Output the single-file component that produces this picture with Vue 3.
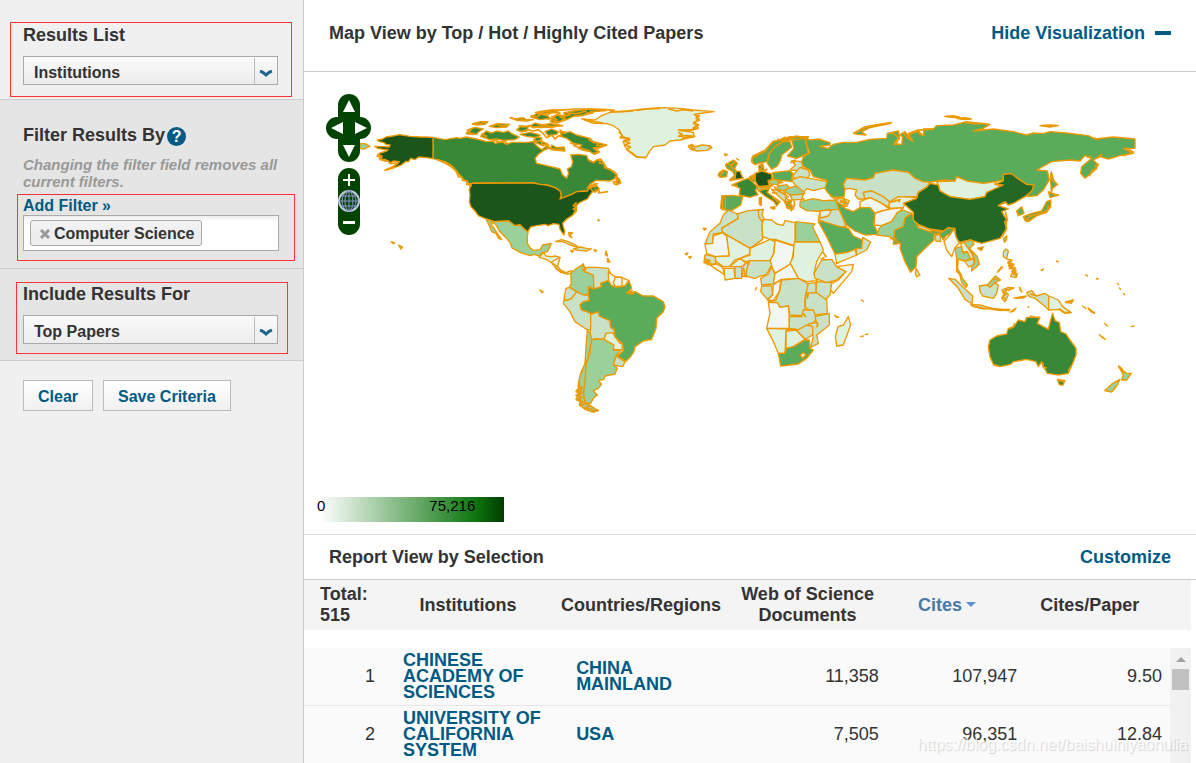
<script setup>
import { ref } from 'vue'

const listBy = ref('Institutions')
const include = ref('Top Papers')

const rows = [
  { rank: 1, name: 'CHINESE ACADEMY OF SCIENCES', country: 'CHINA MAINLAND', docs: '11,358', cites: '107,947', ratio: '9.50' },
  { rank: 2, name: 'UNIVERSITY OF CALIFORNIA SYSTEM', country: 'USA', docs: '7,505', cites: '96,351', ratio: '12.84' }
]

// Shade a (most cited) to h (least cited); each region has its own origin, three units to a pixel.
const regions = [
  {
    id: 'north-america',
    at: 'translate(360 95) scale(0.33333)',
    shapes: [
      ['c', '219,127 255,134 290,128 300,130 318,126 350,132 380,140 400,138 405,145 425,140 440,148 455,142 500,142 520,140 530,152 545,164 560,152 572,158 553,165 535,178 525,190 530,205 560,212 600,222 608,240 620,250 626,235 622,222 635,215 638,200 632,180 655,178 680,182 685,195 700,203 712,195 722,192 735,210 740,220 760,228 772,240 765,250 750,258 708,256 690,268 682,280 710,272 718,282 705,292 690,284 682,288 650,290 635,298 600,312 604,300 600,288 585,278 560,270 540,268 520,264 340,264 330,268 318,258 305,248 290,228 275,212 255,200 240,196 219,191'],
      ['a', '219,127 200,126 180,126 150,124 118,119 98,123 78,126 68,132 52,135 58,140 72,143 78,148 90,150 88,156 70,155 44,154 52,160 75,164 84,163 80,168 60,174 52,180 65,183 58,190 72,198 84,198 90,205 100,198 118,200 112,207 100,214 74,226 98,220 124,210 138,199 146,200 152,190 165,194 176,186 200,188 219,191'],
      ['a', '332,266 340,265 520,264 540,268 560,270 585,278 600,288 604,300 600,312 635,298 650,290 682,288 690,278 698,290 690,300 682,312 660,322 648,332 650,348 636,362 618,374 608,384 610,395 614,408 612,420 606,412 600,402 597,388 580,386 565,392 555,388 530,392 512,396 502,412 490,400 480,390 465,392 446,378 402,380 378,372 355,362 345,348 332,334 328,320 330,300 328,285'],
      ['e', '378,372 402,380 446,378 465,392 480,390 490,400 504,412 502,425 502,445 510,458 520,466 540,464 548,450 574,445 570,455 562,470 545,474 538,484 525,478 510,482 480,472 455,458 452,445 435,425 418,408 408,390 396,382 392,386 398,394 412,415 425,434 415,430 408,415 395,410 388,392'],
      ['c', '318,116 330,102 345,97 370,102 360,108 348,118 330,118'],
      ['c', '362,124 378,108 395,114 410,108 430,112 445,108 455,116 478,126 465,134 430,136 410,132 390,134'],
      ['c', '338,86 362,80 384,80 375,88 350,90'],
      ['c', '388,94 412,86 448,88 440,96 410,98'],
      ['c', '450,68 470,72 490,68 500,75 520,74 500,78 470,76'],
      ['c', '470,104 485,92 505,96 500,108 482,110'],
      ['c', '512,66 530,56 560,60 570,70 540,74'],
      ['c', '480,118 510,112 540,120 530,128 500,124'],
      ['c', '508,94 525,84 545,90 570,86 600,90 580,96 540,98'],
      ['c', '570,80 590,60 620,62 610,54 640,48 690,42 725,46 680,54 670,62 640,64 620,74 590,84'],
      ['c', '526,52 550,48 580,44 600,46 580,52 550,56'],
      ['c', '520,140 528,126 545,128 540,138 562,146 548,152'],
      ['c', '555,110 575,102 595,110 590,118 565,122'],
      ['c', '600,104 612,116 630,110 650,120 690,130 700,140 740,150 715,158 700,158 718,170 704,178 690,170 670,166 655,160 665,150 640,145 620,130 605,125'],
      ['c', '575,150 590,158 612,156 615,168 590,166 572,164'],
      ['c', '768,242 778,252 782,262 770,270'],
      ['e', '0,146 14,146 30,154 12,162 0,160'],
      ['f', '586,440 605,434 625,440 650,452 655,458 630,450 608,440'],
      ['f', '640,462 660,456 680,460 694,462 680,468 655,466'],
      ['e', '94,440 104,444 100,446'], ['e', '116,450 128,456 122,462'],
      ['e', '632,466 640,468 636,472'], ['e', '702,464 710,466 706,470'], ['e', '626,412 638,414 630,420 636,428 628,424'],
      ['e', '738,470 742,482 740,480'], ['e', '744,490 746,496 742,500'], ['e', '714,374 718,376 714,378']
    ],
    coast: [
      '232,194 255,204 272,214 284,224 290,232 296,246 306,246 308,256 322,258 320,268 334,270 330,278',
      '60,176 52,184 66,186 60,194 76,194 86,200 92,206 112,204 100,216 76,226',
      '512,62 530,66 545,56 560,62 575,52 600,54 590,60 575,66 590,74 576,80 600,80 616,70 600,66 630,60 622,54 650,56 680,48',
      '530,54 560,50 590,46 620,44 650,42 700,42 740,44 764,46',
      '690,50 720,48 740,46', '560,72 585,70', '640,64 668,60 700,54',
      '476,92 490,96 510,92 520,98 550,92 580,94 610,92', '470,104 486,110 500,104 520,108 534,104 545,112',
      '545,110 560,128 575,120 585,132 596,122 606,124 600,110 620,112', '520,132 530,140 544,134 546,148 566,150 560,160',
      '450,68 464,72 480,70 490,76 510,74', '336,88 350,84 360,88 372,82 382,82', '390,94 410,88 425,94 448,88',
      '320,106 334,102 326,114 344,116', '364,116 380,124 372,128', '400,134 420,142 436,138 442,148',
      '685,132 700,142 715,144 710,152 740,150 714,160 702,160 716,172 700,176', '630,144 650,150 642,152 670,162 690,168',
      '684,194 700,202 712,194 722,194 718,204 732,206 734,218 748,222 770,238', '764,244 782,264 764,268 760,260 774,260',
      '684,282 694,270 706,276 700,268 714,266', '704,284 718,288 716,294 744,290',
      '650,322 640,332 650,336 640,342 648,346 640,356', '570,160 590,164 612,162'
    ]
  },
  {
    id: 'north-atlantic',
    at: 'translate(530 95) scale(0.33333)',
    shapes: [
      ['g', '155,72 195,75 215,62 240,52 290,48 340,42 400,38 450,40 490,45 552,50 520,54 492,58 508,72 490,85 505,98 480,105 445,105 490,112 492,125 450,135 420,138 405,150 370,155 358,170 348,188 320,186 300,172 285,155 280,140 300,135 275,122 268,105 250,92 230,86 190,85'],
      ['f', '475,155 485,148 494,156 515,150 540,152 546,158 530,166 500,168 482,162'],
      ['e', '584,178 590,180 586,182'], ['e', '520,400 528,400 524,405'], ['e', '466,476 474,474 470,480'], ['e', '476,486 484,484 480,490']
    ],
    coast: [
      '320,46 350,42 390,40', '415,42 440,48 460,44 490,48', '495,60 508,62 498,70 508,76 492,82 506,90 490,98 504,100 480,106 448,106', '445,112 456,118 446,124 470,122 494,124 470,128 455,130',
      '266,110 276,120 270,128 298,130 280,138 300,144 284,150 302,156 290,164 306,174 320,186 348,188', '475,152 490,152 484,160 496,162', '534,152 546,158', '240,50 275,50 310,48',
      '160,72 190,80 220,84'
    ]
  },
  {
    id: 'south-america',
    at: 'translate(530 240) scale(0.33333)',
    shapes: [
      ['g', '28,52 40,36 48,48 64,50 76,48 90,52 82,78 92,90 108,98 124,92 128,100 112,102 92,96 78,84 62,66 48,58'],
      ['h', '64,66 90,52 82,80'],
      ['e', '122,100 140,85 160,72 158,88 165,95 190,105 192,125 190,147 175,140 175,165 160,165 140,155 118,142 124,130'],
      ['f', '160,72 162,84 175,82 200,82 235,85 240,98 235,108 240,120 212,130 215,140 205,147 192,145 190,105 165,95'],
      ['h', '235,95 255,110 275,112 297,122 285,138 258,142 242,135 236,122'],
      ['h', '256,112 276,112 276,138 256,140 250,128'],
      ['f', '108,145 118,142 140,155 125,175 110,182 102,175'],
      ['f', '102,180 110,182 125,175 140,155 160,165 175,165 178,182 160,185 150,195 155,210 172,215 182,222 182,268 172,270 135,245 120,215 100,190'],
      ['f', '182,222 205,215 208,228 240,242 242,262 252,268 255,284 228,280 222,298 195,297 185,300 180,285 182,260'],
      ['e', '185,300 195,297 222,298 252,315 250,330 272,330 258,348 250,375 262,385 255,402 225,408 222,418 205,422 215,432 205,445 190,452 202,465 190,475 182,490 165,488 160,460 165,420 168,370 180,340 182,315'],
      ['e', '172,270 182,285 185,300 182,315 175,350 168,370 165,420 160,460 165,488 185,500 205,512 185,516 165,508 148,495 152,480 138,478 145,460 138,455 148,440 145,428 152,400 165,370 168,320'],
      ['g', '228,280 248,278 255,290 270,310 278,312 275,330 250,328 252,315 222,298'],
      ['f', '258,348 285,365 278,380 250,375'],
      ['d', '175,140 190,147 205,143 215,140 212,130 235,122 242,135 258,142 285,138 297,122 305,145 290,160 315,155 340,168 370,168 400,185 405,200 400,215 380,235 378,265 365,298 340,303 315,320 312,335 300,352 288,364 262,348 280,332 278,312 255,290 252,268 242,262 240,242 208,228 205,215 185,222 172,215 155,210 150,195 160,185 178,182 175,165'],
      ['e', '30,150 40,156 36,158'], ['f', '228,34 232,48 226,44'], ['f', '232,56 240,66 234,66']
    ],
    coast: [
      '150,428 144,438 156,442 140,452 158,458 138,466 156,472 140,480 158,486 150,496 170,490 182,498 162,504 186,508 190,516 206,510', '156,440 152,456 148,470 152,484',
      '292,160 306,152 300,162 314,160', '160,76 168,88 158,92', '154,400 158,388', '76,84 92,96 112,100'
    ]
  },
  {
    id: 'africa',
    at: 'translate(690 200) scale(0.33333)',
    shapes: [
      ['f', '115,30 142,42 145,55 95,85 98,98 70,102 68,130 45,132 60,95 90,70 100,45'],
      ['f', '142,42 175,32 205,30 208,52 216,65 218,118 180,145 98,98 95,85 145,55'],
      ['f', '205,30 220,28 216,45 222,56 214,62 206,50'],
      ['g', '222,58 245,60 260,72 280,76 285,62 315,68 315,138 255,118 240,118 218,110 216,70'],
      ['e', '317,65 345,68 375,72 368,80 390,126 317,126'],
      ['h', '45,132 68,130 70,108 98,98 110,108 118,168 75,170 50,160'],
      ['g', '98,98 180,145 180,162 150,175 135,180 118,200 100,200 78,185 75,170 118,168 110,108'],
      ['g', '180,145 240,118 255,125 250,165 240,182 180,182 165,185 150,175 180,165'],
      ['h', '255,120 312,138 308,170 302,192 255,220 245,200 240,182 252,160'],
      ['g', '317,126 390,126 400,150 380,185 372,220 382,242 350,245 325,235 300,190 310,170 312,130'],
      ['f', '45,164 75,170 78,190 60,195 42,188'],
      ['h', '60,195 80,192 98,202 104,225 90,215 75,205'],
      ['g', '102,205 132,205 135,235 105,240'],
      ['f', '135,198 155,200 155,235 135,235'],
      ['g', '118,200 150,175 168,190 155,200 135,200'],
      ['f', '155,200 175,185 170,230 158,230'],
      ['f', '180,182 240,182 245,195 228,225 210,228 195,235 168,228 172,200'],
      ['f', '245,200 255,225 250,252 215,255 212,235 235,222'],
      ['h', '255,220 302,192 325,235 275,238 250,252'],
      ['f', '215,258 245,258 248,285 232,298 212,275'],
      ['h', '250,255 272,240 268,275 250,302 232,300 248,285'],
      ['f', '275,240 325,235 350,248 358,270 345,295 345,330 350,348 300,345 295,318 270,322 262,308 235,305 258,300 270,270'],
      ['f', '355,250 378,248 378,278 348,280'],
      ['f', '380,245 425,248 420,285 405,300 378,278'],
      ['f', '395,180 425,178 440,200 468,215 440,240 410,248 375,235 372,220'],
      ['h', '440,200 490,193 485,215 430,280 422,270 425,250 445,240 468,215'],
      ['f', '348,280 380,278 410,300 412,340 375,345 345,320'],
      ['h', '235,308 262,308 270,322 295,318 298,350 298,385 230,385 240,340'],
      ['f', '298,350 335,350 340,330 370,330 378,350 375,365 330,390 298,385'],
      ['f', '375,350 418,340 418,375 380,405 385,430 362,442 370,410 355,372 380,368'],
      ['f', '320,392 350,375 368,380 368,405 345,418'],
      ['g', '230,385 320,388 288,392 285,460 265,460 250,425'],
      ['g', '288,394 318,390 345,418 310,440 288,448'],
      ['d', '265,460 285,460 288,445 310,440 345,420 358,420 360,445 370,450 350,475 325,492 272,498'],
      ['h', '330,466 340,458 348,464 338,474'],
      ['g', '475,350 482,375 460,435 440,438 436,410 444,380 460,375'],
      ['d', '385,65 410,65 450,78 475,85 490,108 518,120 515,145 470,158 435,162 410,110'],
      ['g', '435,162 470,158 495,148 500,165 440,190'],
      ['f', '498,146 515,145 518,112 542,126 530,150 500,165'],
      ['f', '390,35 420,28 450,28 468,80 450,80 410,68 385,60'],
      ['g', '390,32 425,30 415,48 390,54'],
      ['e', '40,86 48,86 44,90'], ['e', '434,346 446,352 440,352'], ['e', '514,300 520,304'], ['e', '512,410 520,408'], ['e', '526,404 534,402'],
      ['e', '196,270 200,262']
    ],
    coast: ['42,176 60,182 44,186 62,190 50,194', '344,288 354,284 352,296', '374,362 384,372 380,382', '340,340 348,352', '398,156 410,172', '160,202 166,230', '404,172 392,178']
  },
  {
    id: 'europe',
    at: 'translate(690 110) scale(0.33333)',
    shapes: [
      ['d', '185,155 188,138 225,120 250,95 300,80 355,80 350,90 310,88 280,94 255,110 238,130 232,155 205,160 195,164'],
      ['d', '238,130 255,110 280,94 300,95 305,112 275,135 272,150 262,168 245,178 232,160'],
      ['d', '305,90 345,85 355,130 320,145 292,138 312,115'],
      ['f', '305,152 335,155 338,170 325,182 300,180 316,166'],
      ['f', '310,195 330,172 355,180 360,195 350,205 308,204'],
      ['d', '248,188 300,182 308,190 305,215 280,212 250,208'],
      ['f', '305,210 330,200 412,215 410,232 385,238 370,242 350,236 340,248 320,232'],
      ['e', '292,235 320,228 345,250 330,256 300,255 285,245'],
      ['f', '300,256 340,252 335,268 308,270'],
      ['e', '236,212 255,208 275,216 262,224 240,222'],
      ['e', '262,228 290,224 298,232 280,242 262,238'],
      ['f', '244,238 280,242 290,258 285,275 270,262'],
      ['a', '195,190 215,183 245,192 246,208 234,212 238,228 205,230 195,212'],
      ['c', '128,224 165,208 175,205 205,232 196,240 204,254 180,262 148,255 150,235'],
      ['d', '95,258 125,256 158,260 152,285 125,302 108,300 95,298'],
      ['d', '95,262 106,262 106,298 92,294'],
      ['c', '205,242 238,234 232,248 270,275 260,288 252,275 225,258'],
      ['e', '200,230 238,228 240,234 205,242'],
      ['d', '176,205 194,195 196,215 186,214'],
      ['d', '106,165 130,150 142,160 132,178 148,190 160,204 120,212 134,198 128,184 112,176'],
      ['a', '138,184 150,184 158,205 135,208'],
      ['d', '84,194 98,180 112,184 110,200 90,202'],
      ['c', '206,168 218,160 222,180 208,184'],
      ['d', '208,264 214,262 214,286 208,284'], ['c', '242,292 255,290 252,298'],
      ['d', '284,276 305,270 302,282 310,298 292,295'],
      ['e', '330,275 370,266 400,272 440,270 446,282 444,298 410,300 380,304 350,302 330,290'],
      ['f', '420,258 450,262 478,272 470,290 446,284 438,268'],
      ['e', '104,132 112,134'], ['e', '140,146 146,150']
    ],
    coast: [
      '188,160 186,144 204,134 225,124 236,110 250,94 268,92 284,82 300,86 318,78 340,82 356,80', '262,88 280,92 300,84',
      '108,160 124,166 136,154 122,172 138,180', '86,190 100,182 96,192 88,200',
      '118,210 134,198 126,204', '206,166 220,170 208,178 224,184 232,176', '178,202 196,192 186,210', '252,230 266,244 282,252 296,262', '284,262 300,272 290,280 306,286 290,292 308,298',
      '312,272 314,286 302,304', '98,262 98,298', '210,264 212,284', '240,292 256,296', '200,226 214,234 230,230 250,226', '300,158 316,150 312,160',
      '246,262 256,268 264,278', '440,268 456,262 470,280 450,276', '124,226 144,226', '262,216 280,218', '246,248 262,250', '330,270 344,266'
    ]
  },
  {
    id: 'asia',
    at: 'translate(840 105) scale(0.33333)',
    shapes: [
      ['d', '-105,100 -88,105 -65,102 -30,113 -30,120 -62,124 -35,130 -20,118 10,112 50,112 90,103 140,100 142,85 175,78 178,95 160,118 185,118 188,95 178,90 195,80 210,100 205,85 235,75 240,88 252,92 250,72 280,72 290,62 340,60 380,50 450,58 430,70 400,78 460,72 520,80 540,85 560,90 580,84 610,86 630,80 680,84 745,92 765,102 820,96 885,102 885,130 850,130 880,145 840,152 805,162 780,155 760,165 775,180 765,195 735,220 722,205 725,185 755,160 735,152 720,168 690,165 635,170 590,195 622,198 628,225 610,255 590,272 562,275 568,258 582,240 560,238 535,222 510,206 490,208 490,225 468,230 430,235 380,228 350,215 345,228 310,225 290,228 270,232 250,230 225,220 205,202 160,195 105,205 100,218 75,225 20,220 10,240 15,255 12,275 -20,277 -35,265 -45,250 -38,227 -80,215 -90,195 -110,185 -115,170 -110,155 -90,143 -98,125'],
      ['f', '10,238 20,220 75,225 100,218 105,205 160,195 205,202 225,220 250,230 270,232 262,245 235,262 230,275 195,275 175,285 150,292 130,275 95,258 70,262 75,282 55,282 45,270 50,255 30,250 15,252'],
      ['f', '70,262 95,258 130,275 150,292 148,308 120,292 90,278 75,282'],
      ['h', '60,290 90,278 120,292 145,310 150,318 125,318 105,325 90,308 60,308'],
      ['g', '150,290 175,275 232,278 195,295 190,308 150,310 146,300'],
      ['d', '-12,288 5,300 15,310 40,320 60,308 90,308 105,325 102,360 115,388 75,390 45,378 20,360 10,340 0,320'],
      ['h', '105,325 125,318 150,312 190,308 170,328 155,350 125,362 102,360'],
      ['e', '172,322 190,315 215,325 195,340 190,365 165,375 160,405 150,395 110,390 118,370 125,362 155,350'],
      ['d', '215,325 225,350 235,360 270,375 310,378 325,368 342,370 335,385 318,392 310,405 300,390 282,386 282,405 260,425 230,455 228,485 212,502 195,470 180,430 182,415 160,418 165,375 190,365 195,340'],
      ['f', '230,358 272,374 275,382 235,368'],
      ['f', '283,385 300,390 302,410 288,408'],
      ['g', '290,230 345,228 350,215 380,228 430,235 468,230 465,238 490,245 440,262 435,275 390,283 330,275 300,258 295,240'],
      ['b', '270,235 295,240 300,258 330,275 390,283 435,275 440,262 490,240 465,238 490,228 490,208 515,206 535,222 560,238 582,240 575,258 555,275 520,295 505,300 495,290 475,302 505,312 485,320 500,345 498,375 480,400 425,415 390,405 360,412 345,400 345,370 325,368 310,378 270,372 235,358 220,345 220,322 190,295 230,280 235,262 262,245'],
      ['h', '343,372 348,395 358,415 345,428 335,455 320,435 312,408 325,395'],
      ['e', '345,430 365,425 370,445 385,440 392,460 372,468 355,462 352,490 365,512 350,500 350,460'],
      ['g', '362,415 372,412 392,440 402,462 392,462 382,440 368,440'],
      ['e', '370,410 395,405 402,418 388,430 412,455 418,478 395,498 395,482 405,470 400,450 384,428'],
      ['f', '374,468 400,462 402,478 386,486'],
      ['d', '530,318 545,305 552,325 535,332'],
      ['d', '550,335 575,325 605,318 620,290 632,285 632,305 620,322 590,332 565,350 556,348'],
      ['d', '625,260 645,268 656,270 630,278'],
      ['d', '634,200 640,222 650,240 638,250 634,262 632,230'],
      ['d', '40,85 75,65 155,52 150,56 90,68 65,80 78,90 52,88'],
      ['d', '314,34 340,32 358,36 340,38'], ['d', '350,40 375,38 394,42 372,44'], ['d', '600,62 630,60 655,62 630,66'],
      ['e', '490,402 500,392 500,402 494,412'], ['b', '414,430 430,426 424,436'], ['f', '228,490 240,510 230,516 226,504'],
      ['f', '490,440 498,432 505,438 500,460 490,456'], ['f', '504,470 522,478 512,488'], ['f', '518,500 532,506 528,518 512,514'], ['e', '472,502 488,486'],
      ['e', '604,496 610,492'], ['e', '650,468 654,470'], ['e', '738,510 742,512'], ['e', '770,520 774,522']
    ],
    coast: [
      '45,84 60,76 80,66 110,60 150,54', '146,86 160,84 178,100 166,118 178,118', '190,84 200,96 218,108 206,90 222,82 236,80 250,92', '230,76 260,74 280,72',
      '375,52 400,56 430,56 448,60', '740,156 752,154', '748,214 758,194 770,192 766,182 776,178', '770,160 784,148 776,156',
      '632,204 634,220 642,230 654,240', '552,336 562,346 568,334 584,330 600,326 622,316 626,300', '632,264 650,270',
      '0,286 12,290 20,294 4,306', '150,292 180,284 176,292', '150,400 168,400 166,408 178,412', '500,462 516,466 504,474 520,478 510,486 526,490 520,500 530,514', '280,376 306,380 284,392', '484,298 500,292',
      '496,320 502,345 494,350 500,370 486,396', '320,34 352,36', '358,40 388,42', '608,62 648,62', '530,318 536,328', '860,130 880,142 850,152', '412,428 424,434', '760,98 776,104'
    ]
  },
  {
    id: 'oceania',
    at: 'translate(930 230) scale(0.33333)',
    shapes: [
      ['c', '190,403 180,380 175,350 180,330 200,318 230,312 235,295 250,292 265,270 285,275 290,262 330,262 322,280 355,298 362,270 368,250 375,272 388,278 392,305 408,312 420,330 438,355 438,375 430,395 415,430 385,435 352,430 340,408 335,395 325,410 318,395 290,388 250,395 242,403 210,410'],
      ['c', '382,448 405,452 398,466 388,464'],
      ['e', '524,482 548,460 570,448 562,465 545,486'],
      ['e', '565,408 578,422 590,430 604,430 590,450 575,450 580,435'],
      ['f', '56,145 75,148 100,172 128,198 126,222 105,208 85,175'],
      ['f', '122,224 150,225 185,235 160,236 130,230'],
      ['e', '88,130 100,148 112,165 108,172 95,158'],
      ['f', '148,168 170,165 190,155 205,165 200,190 190,205 158,198 150,185'],
      ['e', '172,165 196,138 212,150 195,158 180,172'],
      ['f', '215,180 235,172 252,174 225,182 235,195 225,215 215,205 222,192'],
      ['f', '290,188 305,182 318,198 345,190 356,198 356,240 340,225 315,205 298,200'],
      ['g', '356,198 385,210 398,230 424,248 405,250 388,238 356,240'],
      ['f', '184,238 220,238 240,238 215,242'], ['f', '240,246 258,234 250,244'],
      ['e', '406,216 430,210 424,220'], ['e', '458,228 468,236'], ['e', '474,234 494,250 484,246'], ['e', '508,314 526,328 516,322'], ['e', '524,280 532,288'], ['e', '604,290 612,288'],
      ['e', '334,122 340,118'], ['e', '380,94 384,96'], ['e', '468,136 472,138'], ['e', '500,146 503,148'], ['e', '562,160 566,164'], ['e', '568,174 572,178'], ['e', '580,190 584,194'],
      ['e', '268,172 276,186'], ['e', '252,204 280,204 290,198'], ['e', '294,230 297,232']
    ],
    coast: [
      '238,296 250,290 254,280', '300,258 316,262 328,262', '338,398 340,412 350,414', '190,404 204,408', '565,408 576,416 580,428', '384,450 402,456',
      '224,176 236,180 250,174', '218,184 228,192 218,200 228,208 222,214', '234,108 246,102 238,116 252,112 246,124 258,122 250,134', '204,124 216,110', '270,172 272,184', '258,204 270,202',
      '406,218 420,216 430,210', '130,228 160,236 190,236 238,242', '414,424 424,408', '300,192 318,196', '190,148 206,148', '476,236 494,250', '388,236 400,246 420,248'
    ]
  }
]
</script>

<template>
  <div class="page">
    <aside class="side">
      <section class="block first">
        <label class="heading" for="list-by">Results List</label>
        <div class="picker">
          <select id="list-by" v-model="listBy"><option>Institutions</option><option>Countries/Regions</option></select>
          <svg class="chev" viewBox="0 0 14 8" aria-hidden="true"><path d="M1 1 Q4 2 7 5 Q10 2 13 1" /></svg>
        </div>
        <i class="mark mark-list"></i>
      </section>
      <section class="block shade filter">
        <div class="heading">Filter Results By
          <button class="help" type="button" aria-label="Help">?</button>
        </div>
        <p class="note">Changing the filter field removes all current filters.</p>
        <a class="add" href="#">Add Filter »</a>
        <div class="tags">
          <button class="tag" type="button">
            <svg viewBox="0 0 10 10" aria-hidden="true"><path d="M1 1 L9 9 M9 1 L1 9" /></svg>Computer Science
          </button>
        </div>
        <i class="mark mark-filter"></i>
      </section>
      <section class="block shade include">
        <label class="heading" for="include">Include Results For</label>
        <div class="picker">
          <select id="include" v-model="include"><option>Top Papers</option><option>Hot Papers</option></select>
          <svg class="chev" viewBox="0 0 14 8" aria-hidden="true"><path d="M1 1 Q4 2 7 5 Q10 2 13 1" /></svg>
        </div>
        <i class="mark mark-include"></i>
      </section>
      <div class="actions">
        <button type="button">Clear</button>
        <button type="button">Save Criteria</button>
      </div>
    </aside>

    <main class="main">
      <header class="bar top">
        <h2>Map View by Top / Hot / Highly Cited Papers</h2>
        <a class="hide" href="#">Hide Visualization<span class="dash"></span></a>
      </header>

      <section class="map">
        <svg class="world" viewBox="304 72 892 425" preserveAspectRatio="xMinYMin meet" role="img" aria-label="World map">
          <g v-for="r in regions" :key="r.id" :transform="r.at">
            <polygon v-for="(s, i) in r.shapes" :key="i" :class="'f-' + s[0]" :points="s[1]" />
            <polyline v-for="(c, i) in r.coast" :key="'c' + i" class="coast" :points="c" />
          </g>
        </svg>
        <div class="nav">
          <div class="pan">
            <button class="n" type="button" aria-label="North"><svg viewBox="0 0 12 12"><path d="M6 0 L12 12 H0Z" /></svg></button>
            <button class="w" type="button" aria-label="West"><svg viewBox="0 0 12 12"><path d="M0 6 L12 0 V12Z" /></svg></button>
            <button class="e" type="button" aria-label="East"><svg viewBox="0 0 12 12"><path d="M12 6 L0 0 V12Z" /></svg></button>
            <button class="s" type="button" aria-label="South"><svg viewBox="0 0 12 12"><path d="M6 12 L12 0 H0Z" /></svg></button>
          </div>
          <div class="zoom">
            <button type="button" aria-label="Zoom in"><svg viewBox="0 0 22 22"><path d="M10 6 H12 V11 H17 V13 H12 V18 H10 V13 H5 V11 H10Z" /></svg></button>
            <button type="button" aria-label="Whole world">
              <svg class="globe" viewBox="0 0 22 22"><circle cx="11" cy="11" r="10" /><path d="M1 11 H21 M3 6 H19 M3 16 H19 M11 1 V21" /><ellipse cx="11" cy="11" rx="4" ry="10" /><ellipse cx="11" cy="11" rx="7" ry="10" /></svg>
            </button>
            <button type="button" aria-label="Zoom out"><svg viewBox="0 0 22 22"><path d="M5 9 H17 V12 H5Z" /></svg></button>
          </div>
        </div>
        <div class="legend"><span>0</span><span>75,216</span></div>
      </section>

      <header class="bar report">
        <h2>Report View by Selection</h2>
        <a href="#">Customize</a>
      </header>

      <div class="grid">
        <table class="head">
          <colgroup><col class="h1" /><col class="h2" /><col class="h3" /><col class="h4" /><col class="h5" /><col class="h6" /></colgroup>
          <thead>
            <tr>
              <th class="total"><span>Total:<br />515</span></th>
              <th>Institutions</th>
              <th>Countries/Regions</th>
              <th class="docs">Web of Science Documents</th>
              <th class="sorted">Cites<i class="caret"></i></th>
              <th class="last">Cites/Paper</th>
            </tr>
          </thead>
        </table>
        <div class="scroller">
          <table class="body">
            <colgroup><col class="b1" /><col class="b2" /><col class="b3" /><col class="b4" /><col class="b5" /><col class="b6" /></colgroup>
            <tbody>
              <tr v-for="row in rows" :key="row.rank">
                <td class="num rank">{{ row.rank }}</td>
                <td class="text"><a href="#">{{ row.name }}</a></td>
                <td class="text"><a href="#">{{ row.country }}</a></td>
                <td class="num">{{ row.docs }}</td>
                <td class="num">{{ row.cites }}</td>
                <td class="num ratio">{{ row.ratio }}</td>
              </tr>
            </tbody>
          </table>
          <div class="rail"><i class="up"></i><i class="thumb"></i></div>
        </div>
      </div>
    </main>
    <div class="watermark">https://blog.csdn.net/baishuiniyaonulia</div>
  </div>
</template>

<style>
body { overflow: hidden; }
</style>

<style scoped>
* { box-sizing: border-box; }
.page {
  position: relative;
  display: grid;
  grid-template-columns: 304px 1fr;
  height: 100vh;
  overflow: hidden;
  font-family: "Liberation Sans", Arial, sans-serif;
  font-size: 18px;
  color: #333;
  background: #fff;
}
button, select { font-family: inherit; color: inherit; margin: 0; }
a { color: #005a84; font-weight: bold; text-decoration: none; }
.side { background: #f0f0f0; border-right: 1px solid #ccc; }
.block { position: relative; padding: 0 25px 0 23px; border-bottom: 1px solid #ccc; }
.shade { background: #e5e5e5; }
.first { padding-top: 24px; padding-bottom: 14px; }
.filter { padding-top: 24px; padding-bottom: 17px; }
.include { padding-top: 14px; padding-bottom: 16px; }
.heading { display: flex; align-items: center; gap: 2px; height: 22px; font-weight: bold; line-height: 22px; }
.picker { position: relative; margin-top: 10px; height: 29px; }
.picker select {
  width: 100%; height: 29px; padding: 4px 0 0 10px;
  appearance: none; border: 1px solid #aaa; border-radius: 0;
  background: linear-gradient(#fafafa, #ececec);
  font-size: 16px; font-weight: bold;
}
.picker::after { content: ""; position: absolute; top: 2px; bottom: 1px; right: 23px; width: 1px; background: #bbb; }
.chev { position: absolute; right: 5px; top: 14px; width: 14px; height: 8px; fill: none; stroke: #1a6590; stroke-width: 3; pointer-events: none; }
.help {
  width: 19px; height: 19px; padding: 0; margin-top: 2px; border: 0; border-radius: 50%;
  background: #005a84; color: #fff; font-size: 16px; font-weight: bold; line-height: 19px;
}
.note { margin: 10px -4px 0 0; font-size: 15px; line-height: 17px; font-weight: bold; font-style: italic; color: #999; }
.add { display: block; margin-top: 6px; font-size: 16px; line-height: 19px; }
.tags { height: 36px; width: 256px; padding: 4px 6px; border: 1px solid #aaa; background: linear-gradient(#eee, #fff 6px); }
.tag {
  display: flex; align-items: center; gap: 4px; height: 26px; padding: 2px 7px 0 9px;
  border: 1px solid #aaa; border-radius: 3px; background: linear-gradient(#f4f4f4, #ededed 50%, #eee);
  font-size: 16px; font-weight: bold; white-space: nowrap;
}
.tag svg { width: 10px; height: 10px; stroke: #999; stroke-width: 3; fill: none; }
.mark { position: absolute; border: 1px solid #ff3333; pointer-events: none; }
.mark-list { top: 22px; left: 10px; right: 11px; bottom: 2px; }
.mark-filter { top: 94px; left: 17px; right: 8px; bottom: 7px; }
.mark-include { top: 13px; left: 16px; right: 15px; bottom: 6px; }
.actions { display: flex; gap: 10px; padding: 19px 23px; }
.actions button {
  height: 31px; padding: 2px 14px 0; border: 1px solid #bbb;
  background: linear-gradient(#fff, #f0f0f0); color: #005a84; font-size: 16px; font-weight: bold;
}

.main { min-width: 0; }
.bar { display: flex; justify-content: space-between; align-items: center; padding: 0 25px; }
.bar h2 { margin: 0; font-size: 18px; line-height: 22px; }
.top { height: 72px; padding-bottom: 6px; border-bottom: 1px solid #ccc; }
.hide { display: flex; align-items: center; gap: 10px; line-height: 22px; }
.dash { width: 16px; height: 4px; background: #005a84; }
.report { height: 46px; border-top: 1px solid #ddd; border-bottom: 1px solid #ccc; }

.map { position: relative; padding-bottom: 12px; }
.world { display: block; width: 100%; height: 425px; }
.world polygon { stroke: #ee9900; stroke-width: 4; stroke-linejoin: round; }
.world .coast { fill: none; stroke: #ee9900; stroke-width: 5; stroke-linejoin: round; }
.f-a { fill: #1b551a; }
.f-b { fill: #256825; }
.f-c { fill: #388838; }
.f-d { fill: #5aab5a; }
.f-e { fill: #9ad09a; }
.f-f { fill: #c8e1c7; }
.f-g { fill: #dff1df; }
.f-h { fill: #f2f7f3; }
.nav { position: absolute; top: 22px; left: 22px; width: 45px; }
.nav button { display: flex; align-items: center; justify-content: center; padding: 0; border: 0; background: none; }
.nav svg { width: 12px; height: 12px; fill: #fff; }
.pan {
  display: grid; grid-template-columns: 22px 23px; grid-template-rows: 23px 22px 23px; height: 68px; position: relative;
}
.pan::before { content: ""; position: absolute; left: 12px; top: 0; width: 22px; height: 68px; border-radius: 11px; background: #004400; }
.pan::after { content: ""; position: absolute; left: 0; top: 23px; width: 45px; height: 22px; border-radius: 14px; background: #004400; }
.pan button { position: relative; z-index: 1; }
.pan .n, .pan .s { grid-column: 1 / 3; }
.pan .n, .pan .s { padding-left: 1px; }
.pan .e { padding-left: 3px; }
.zoom { display: flex; flex-direction: column; width: 22px; height: 67px; margin: 6px 0 0 12px; border-radius: 11px; background: #004400; }
.zoom button { height: 22px; }
.zoom svg { width: 22px; height: 22px; }
.zoom .globe { fill: none; stroke: #8c94d0; stroke-width: 1; }
.globe circle { stroke: #c0c8e0; stroke-width: 2; }
.legend {
  display: flex; gap: 104px; width: 184px; height: 25px; margin-left: 16px;
  background: linear-gradient(90deg, #fff, #0f770f 84%, #003c00);
  color: #000; font-size: 15px; line-height: 18px;
}
.legend span:first-child { margin-left: -3px; }

.grid { padding-right: 5px; }
table { width: 100%; table-layout: fixed; border-collapse: separate; border-spacing: 0; }
.head { height: 50px; background: #f4f4f4; }
th { padding: 0; font-size: 18px; line-height: 21px; text-align: center; vertical-align: middle; }
.total span { display: inline-block; text-align: left; }
.h1 { width: 9%; }
.h2 { width: 19%; }
.h3 { width: 20%; }
.h4 { width: 18%; }
.h5 { width: 13%; }
.h6 { width: 21%; }
.docs { padding-right: 4px; }
.sorted { color: #4a78a8; }
.caret { display: inline-block; margin: 0 0 4px 4px; border: 5px solid transparent; border-bottom: 0; border-top-color: #5b8fd0; }
.last { padding-right: 16px; }
.scroller { display: flex; margin-top: 18px; }
.body { flex: 1; background: #fafafa; }
.b1 { width: 9%; }
.b2 { width: 20%; }
.b3 { width: 20%; }
.b4 { width: 19%; }
.b5 { width: 16%; }
.b6 { width: 16%; }
td { padding: 4px 14px 5px 21px; border-bottom: 1px solid #e8e8e8; line-height: 16px; vertical-align: middle; }
.num { text-align: right; }
.rank { padding-left: 0; padding-right: 7px; }
.ratio { padding-right: 8px; }
.rail { display: flex; flex-direction: column; align-items: center; width: 21px; background: #f1f1f1; }
.up { margin-top: 9px; border: 5px solid transparent; border-top: 0; border-bottom-color: #a3a3a3; }
.thumb { width: 17px; height: 21px; margin-top: 7px; background: #c1c1c1; }
.watermark {
  position: absolute; right: 8px; bottom: 8px; font-size: 16px; line-height: 20px;
  color: rgba(255, 255, 255, 0.8); text-shadow: 1px 1px 1px rgba(0, 0, 0, 0.16); pointer-events: none;
}
</style>
